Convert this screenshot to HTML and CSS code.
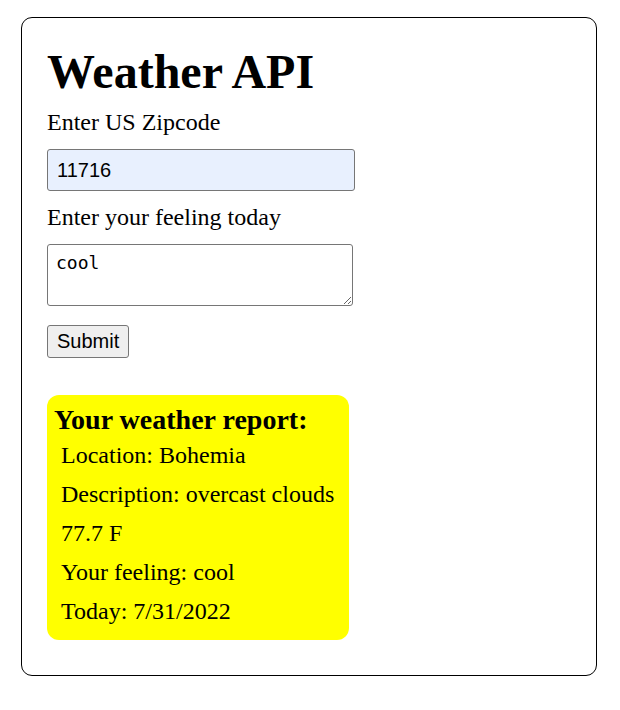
FILE: index.html
```html
<!DOCTYPE html>
<html lang="en">
<head>
<meta charset="utf-8">
<title>Weather API</title>
<link rel="stylesheet" href="styles.css">
</head>
<body>
<div class="card">
  <h1 class="title">Weather API</h1>
  <form class="form">
    <label class="label label-zip" for="zip">Enter US Zipcode</label>
    <input class="zip-input" id="zip" type="text" value="11716">
    <label class="label label-feel" for="feel">Enter your feeling today</label>
    <textarea class="feel-input" id="feel">cool</textarea>
    <button class="submit" type="button">Submit</button>
  </form>
  <div class="report">
    <h3 class="report-title">Your weather report:</h3>
    <div class="report-line">Location: Bohemia</div>
    <div class="report-line">Description: overcast clouds</div>
    <div class="report-line">77.7 F</div>
    <div class="report-line">Your feeling: cool</div>
    <div class="report-line">Today: 7/31/2022</div>
  </div>
</div>
</body>
</html>
```

FILE: styles.css
```css
html, body {
  margin: 0;
  padding: 0;
  background: #ffffff;
}

body {
  font-family: "Liberation Serif", "Times New Roman", serif;
  font-size: 24px;
  color: #000000;
  padding: 17px 23px 34px 21px;
}

.card {
  border: 1px solid #000000;
  border-radius: 11px;
  padding: 26px 25px 35px 25px;
}

.title {
  margin: 0 0 10px 0;
  font-size: 48px;
  font-weight: bold;
  line-height: normal;
}

.form {
  display: flex;
  flex-direction: column;
  align-items: flex-start;
}

.label {
  display: block;
  line-height: normal;
}

.zip-input {
  box-sizing: border-box;
  width: 308px;
  height: 42px;
  margin: 13px 0 13px 0;
  padding: 0 9px;
  border: 1px solid #767676;
  border-radius: 3px;
  background: #e8f0fe;
  font-family: "Liberation Sans", Arial, sans-serif;
  font-size: 20px;
  color: #000000;
}

.feel-input {
  box-sizing: border-box;
  width: 306px;
  height: 62px;
  margin: 13px 0 19px 0;
  padding: 7px 8px 3px 8px;
  border: 1px solid #767676;
  border-radius: 3px;
  background: #ffffff;
  font-family: "DejaVu Sans Mono", "Liberation Mono", monospace;
  font-size: 18px;
  color: #000000;
  resize: both;
}

.submit {
  box-sizing: border-box;
  height: 33px;
  padding: 0 9px;
  border: 1px solid #767676;
  border-radius: 3px;
  background: #efefef;
  font-family: "Liberation Sans", Arial, sans-serif;
  font-size: 20px;
  color: #000000;
}

.report {
  width: 302px;
  box-sizing: border-box;
  margin-top: 37px;
  padding: 9px 8px 9px 7px;
  background: #ffff00;
  border-radius: 12px;
}

.report-title {
  margin: 0;
  font-size: 28px;
  font-weight: bold;
  line-height: normal;
}

.report-line {
  padding-left: 7px;
  line-height: 39px;
}
```
